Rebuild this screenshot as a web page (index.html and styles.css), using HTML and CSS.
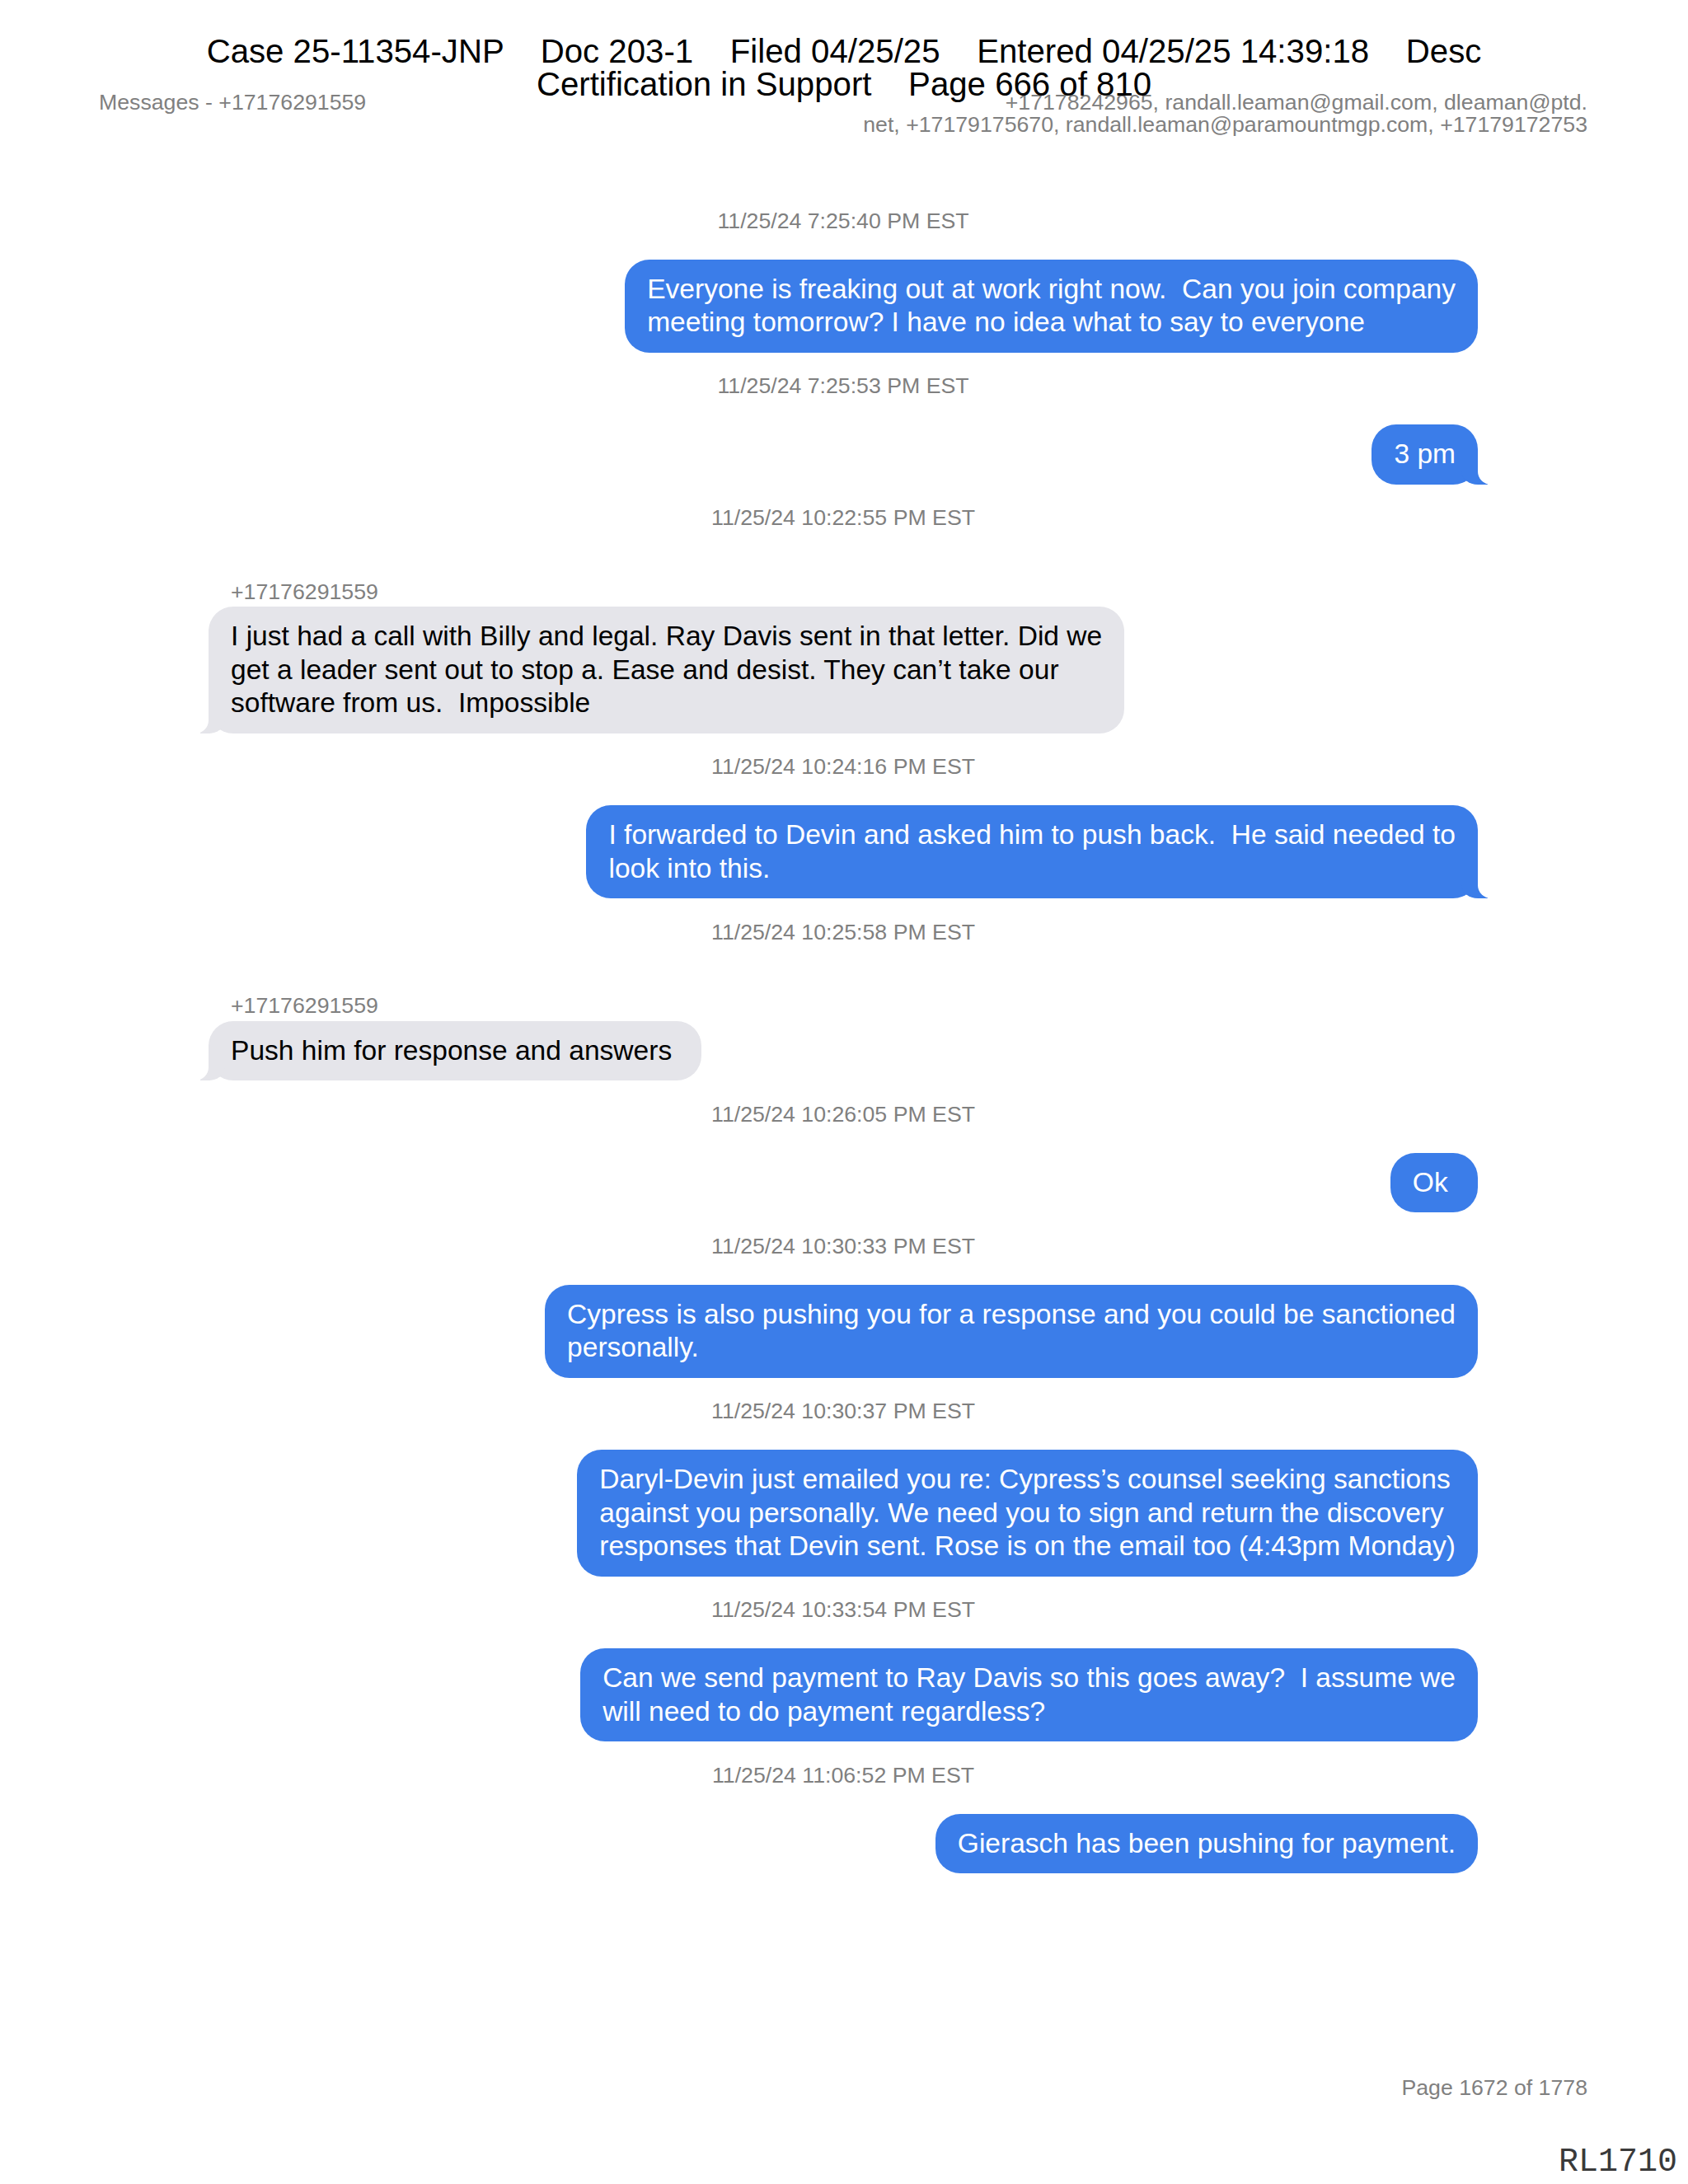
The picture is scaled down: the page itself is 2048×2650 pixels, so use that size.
FILE: index.html
```html
<!DOCTYPE html>
<html lang="en">
<head>
<meta charset="utf-8">
<title>Messages - +17176291559</title>
<link rel="stylesheet" href="styles.css">
</head>
<body>
<div class="page">
  <div class="meta">
    <div class="meta-left">Messages - +17176291559</div>
    <div class="meta-right">+17178242965, randall.leaman@gmail.com, dleaman@ptd.<br>net, +17179175670, randall.leaman@paramountmgp.com, +17179172753</div>
  </div>

  <div class="thread">
    <div class="ts">11/25/24 7:25:40 PM EST</div>
    <div class="bubble me">Everyone is freaking out at work right now.&nbsp; Can you join company<br>meeting tomorrow? I have no idea what to say to everyone</div>

    <div class="ts">11/25/24 7:25:53 PM EST</div>
    <div class="bubble me tail">3 pm</div>

    <div class="ts">11/25/24 10:22:55 PM EST</div>
    <div class="sender">+17176291559</div>
    <div class="bubble them tail">I just had a call with Billy and legal. Ray Davis sent in that letter. Did we<br>get a leader sent out to stop a. Ease and desist. They can’t take our<br>software from us.&nbsp; Impossible</div>

    <div class="ts">11/25/24 10:24:16 PM EST</div>
    <div class="bubble me tail">I forwarded to Devin and asked him to push back.&nbsp; He said needed to<br>look into this.</div>

    <div class="ts">11/25/24 10:25:58 PM EST</div>
    <div class="sender">+17176291559</div>
    <div class="bubble them tail">Push him for response and answers&nbsp;</div>

    <div class="ts">11/25/24 10:26:05 PM EST</div>
    <div class="bubble me">Ok&nbsp;</div>

    <div class="ts">11/25/24 10:30:33 PM EST</div>
    <div class="bubble me">Cypress is also pushing you for a response and you could be sanctioned<br>personally.</div>

    <div class="ts">11/25/24 10:30:37 PM EST</div>
    <div class="bubble me">Daryl-Devin just emailed you re: Cypress’s counsel seeking sanctions<br>against you personally. We need you to sign and return the discovery<br>responses that Devin sent. Rose is on the email too (4:43pm Monday)</div>

    <div class="ts">11/25/24 10:33:54 PM EST</div>
    <div class="bubble me">Can we send payment to Ray Davis so this goes away?&nbsp; I assume we<br>will need to do payment regardless?</div>

    <div class="ts">11/25/24 11:06:52 PM EST</div>
    <div class="bubble me">Gierasch has been pushing for payment.</div>
  </div>

  <div class="footer">Page 1672 of 1778</div>
</div>

<div class="case-stamp">Case 25-11354-JNP    Doc 203-1    Filed 04/25/25    Entered 04/25/25 14:39:18    Desc
Certification in Support    Page 666 of 810</div>

<div class="bates">RL1710</div>
</body>
</html>
```

FILE: styles.css
```css
html, body {
  margin: 0;
  padding: 0;
  background: #ffffff;
}

body {
  position: relative;
  width: 2048px;
  height: 2650px;
  overflow: hidden;
  font-family: "Liberation Sans", Arial, Helvetica, sans-serif;
  color: #000;
}

.page {
  box-sizing: border-box;
  height: 2650px;
  padding: 111px 122px 0 120px;
  display: flex;
  flex-direction: column;
}

.meta {
  display: flex;
  justify-content: space-between;
  align-items: flex-start;
  font-size: 26.7px;
  line-height: 27px;
  color: #808080;
}

.meta-right {
  text-align: right;
}

.thread {
  display: flex;
  flex-direction: column;
  margin: 62px 133px 0;
}

.ts {
  margin-top: 25.5px;
  font-size: 26.7px;
  line-height: 30px;
  color: #808080;
  text-align: center;
}

.sender {
  align-self: flex-start;
  margin-top: 59.5px;
  padding-left: 27px;
  font-size: 26.7px;
  line-height: 30px;
  color: #808080;
}

.bubble {
  position: relative;
  margin-top: 32px;
  padding: 16px 27px;
  border-radius: 30px;
  font-size: 33.55px;
  line-height: 40.5px;
}

.sender + .bubble {
  margin-top: 3.5px;
}

.me {
  align-self: flex-end;
  background: #3b7de9;
  color: #ffffff;
}

.them {
  align-self: flex-start;
  background: #e5e5ea;
  color: #000000;
}

.tail::before,
.tail::after {
  content: "";
  position: absolute;
  bottom: 0;
  height: 30px;
}

.me.tail::before {
  right: -12px;
  width: 32px;
  background: #3b7de9;
  border-bottom-left-radius: 20px 16px;
}

.me.tail::after {
  right: -44px;
  width: 44px;
  background: #ffffff;
  border-bottom-left-radius: 16px;
}

.them.tail::before {
  left: -10px;
  width: 30px;
  background: #e5e5ea;
  border-bottom-right-radius: 20px 16px;
}

.them.tail::after {
  left: -44px;
  width: 44px;
  background: #ffffff;
  border-bottom-right-radius: 16px;
}

.footer {
  margin-top: auto;
  margin-bottom: 101.6px;
  text-align: right;
  font-size: 26.7px;
  line-height: 30px;
  color: #808080;
}

.case-stamp {
  position: absolute;
  top: 42.5px;
  left: 0;
  width: 2048px;
  text-align: center;
  white-space: pre;
  font-size: 40.2px;
  line-height: 40px;
  color: #000;
}

.bates {
  position: absolute;
  right: 13px;
  top: 2604px;
  font-family: "Liberation Mono", "Courier New", monospace;
  font-size: 40px;
  line-height: 40px;
  color: #3a3a3a;
}
```
